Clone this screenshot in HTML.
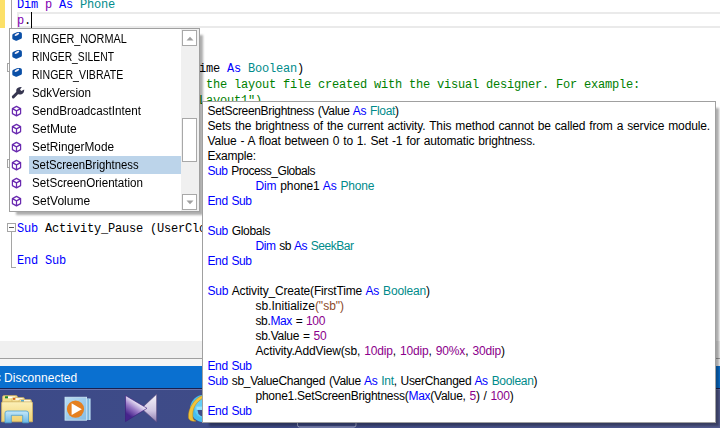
<!DOCTYPE html>
<html><head><meta charset="utf-8">
<style>
*{margin:0;padding:0;box-sizing:border-box}
html,body{width:720px;height:428px;overflow:hidden;background:#fff;position:relative}
.abs{position:absolute}
.cl{position:absolute;font-family:"Liberation Mono",monospace;font-size:12px;letter-spacing:-0.2px;line-height:16px;white-space:pre}
.tl{position:absolute;font-family:"Liberation Sans",sans-serif;font-size:12px;line-height:15px;white-space:pre;color:#000;word-spacing:0.8px}
.ai{position:absolute;left:0;width:170px;height:18px;font-family:"Liberation Sans",sans-serif;font-size:12px;line-height:18px;white-space:pre;color:#000}
.at{position:absolute;left:18px;top:0px;height:18px;padding-left:3px}
.sx{display:inline-block;transform-origin:0 0}
.sbx{position:absolute;left:18px;top:0;width:152px;height:18px;background:#bcd4ea}
.ic{position:absolute}
</style></head><body>
<div class="abs" style="left:0;top:0;width:5px;height:28px;background:#fce068"></div>
<div class="abs" style="left:11px;top:0;width:1px;height:40px;background:#a5a5a5"></div>
<div class="abs" style="left:17px;top:12px;width:703px;height:16px;border:2px solid #eaeaea;border-right:none"></div>
<div class="abs" style="left:31px;top:12px;width:1px;height:16px;background:#000"></div>
<div class="cl" style="top:-3px;left:17px"><span style="color:#0000ff">Dim</span><span style="color:#000000"> </span><span style="color:#8000b0">p</span><span style="color:#000000"> </span><span style="color:#0000ff">As</span><span style="color:#000000"> </span><span style="color:#008b8b">Phone</span></div><div class="cl" style="top:13px;left:17px"><span style="color:#8000b0">p</span><span style="color:#000000">.</span></div><div class="cl" style="top:29px;left:17px"><span style="color:#0000ff">End Sub</span></div><div class="cl" style="top:61px;left:17px"><span style="color:#0000ff">Sub</span><span style="color:#000000"> Activity_Create(FirstTime </span><span style="color:#0000ff">As</span><span style="color:#000000"> </span><span style="color:#008b8b">Boolean</span><span style="color:#000000">)</span></div><div class="cl" style="top:77px;left:17px"><span style="color:#008000">    &#x27;Do not forget to load the layout file created with the visual designer. For example:</span></div><div class="cl" style="top:93px;left:17px"><span style="color:#008000">    &#x27;Activity.LoadLayout(&quot;Layout1&quot;)</span></div><div class="cl" style="top:125px;left:17px"><span style="color:#0000ff">End Sub</span></div><div class="cl" style="top:157px;left:17px"><span style="color:#0000ff">Sub</span><span style="color:#000000"> Activity_Resume</span></div><div class="cl" style="top:189px;left:17px"><span style="color:#0000ff">End Sub</span></div><div class="cl" style="top:221px;left:17px"><span style="color:#0000ff">Sub</span><span style="color:#000000"> Activity_Pause (UserClosed </span><span style="color:#0000ff">As</span><span style="color:#000000"> </span><span style="color:#008b8b">Boolean</span><span style="color:#000000">)</span></div><div class="cl" style="top:253px;left:17px"><span style="color:#0000ff">End Sub</span></div>
<div class="abs" style="left:7px;top:63px;width:9px;height:9px;border:1px solid #a5a5a5;background:#fff"></div>
<div class="abs" style="left:7px;top:159px;width:9px;height:9px;border:1px solid #a5a5a5;background:#fff"></div>
<div class="abs" style="left:7px;top:223px;width:9px;height:9px;border:1px solid #a5a5a5;background:#fff"></div>
<div class="abs" style="left:9px;top:227px;width:5px;height:1px;background:#555"></div>
<div class="abs" style="left:11px;top:232px;width:1px;height:36px;background:#a5a5a5"></div>
<div class="abs" style="left:11px;top:267px;width:5px;height:1px;background:#a5a5a5"></div>
<div class="abs" style="left:0;top:341px;width:720px;height:17px;background:#f0f0f0"></div>
<div class="abs" style="left:0;top:358px;width:720px;height:1px;background:#a0a0a0"></div>
<div class="abs" style="left:0;top:359px;width:720px;height:7px;background:#f5f5f5"></div>
<div class="abs" style="left:0;top:366px;width:720px;height:22px;background:#0a70d0"></div>
<div class="abs" style="left:4px;top:367px;height:22px;line-height:22px;font-family:'Liberation Sans',sans-serif;font-size:12px;color:#fff;letter-spacing:0.05px">Disconnected</div>
<div class="abs" style="left:0;top:388px;width:720px;height:40px;background:linear-gradient(90deg,#3c4a88 0%,#404c88 40%,#545c90 100%)"></div>
<div class="abs" style="left:0;top:388px;width:720px;height:1px;background:#1a2050"></div>
<div class="abs" style="left:0;top:389px;width:720px;height:1px;background:#6a72aa"></div>
<svg class="abs" style="left:0;top:0" width="720" height="428" viewBox="0 0 720 428">
<defs>
<linearGradient id="fg" x1="0" y1="0" x2="0" y2="1"><stop offset="0" stop-color="#fbf0b8"/><stop offset="1" stop-color="#f0d070"/></linearGradient>
<linearGradient id="bl" x1="0" y1="0" x2="0" y2="1"><stop offset="0" stop-color="#c6e8f8"/><stop offset="1" stop-color="#6cb8e6"/></linearGradient>
<linearGradient id="kl" x1="0.55" y1="0.15" x2="0.15" y2="0.85"><stop offset="0.1" stop-color="#f2eefa"/><stop offset="0.5" stop-color="#9878c6"/><stop offset="0.9" stop-color="#46248c"/></linearGradient>
<linearGradient id="kr" x1="0" y1="0" x2="0" y2="1"><stop offset="0" stop-color="#f6f4fa"/><stop offset="0.6" stop-color="#d0c6e2"/><stop offset="1" stop-color="#8c7cae"/></linearGradient>
<linearGradient id="mp" x1="0" y1="0" x2="1" y2="1"><stop offset="0" stop-color="#b8dcf2"/><stop offset="1" stop-color="#86bde4"/></linearGradient>
</defs>
<!-- folder -->
<path d="M2.5 397 Q2.5 395.5 4 395.5 L16 395.5 Q17.5 395.5 17.5 397 L17.5 402 L2.5 402 Z" fill="#f3dc8c" stroke="#cfb060" stroke-width="0.6"/>
<rect x="5" y="396.3" width="3" height="2" fill="#1a8a2a"/>
<rect x="8" y="396.6" width="7" height="1.6" fill="#ffffff"/>
<path d="M12 399 Q12 397.6 13.5 397.6 L23 397.6 Q24.5 397.6 24.5 399 L24.5 402 L12 402 Z" fill="#f5e19a" stroke="#cfb060" stroke-width="0.6"/>
<rect x="13" y="398" width="2.5" height="1.8" fill="#d0601a"/>
<rect x="15.5" y="398.3" width="7" height="1.5" fill="#ffffff"/>
<path d="M19 401 Q19 399.5 20.5 399.5 L30 399.5 Q31.5 399.5 31.5 401 L31.5 403 L19 403 Z" fill="#f6e4a2" stroke="#cfb060" stroke-width="0.6"/>
<rect x="21" y="400.2" width="3" height="2" fill="#2a9ae0"/>
<rect x="24" y="400.4" width="6" height="1.6" fill="#ffffff"/>
<path d="M1.6 403 Q1.6 401.8 3 401.8 L31 401.8 Q32.5 401.8 32.5 403 L32.5 421.8 L1.6 421.8 Z" fill="url(#fg)" stroke="#d2b462" stroke-width="0.8"/>
<path d="M5 413 Q5 411 7.5 411 L26 411 Q28.5 411 28.5 413 L28.5 422.8 L22.7 422.8 L22.7 415.3 L11.3 415.3 L11.3 422.8 L5 422.8 Z" fill="url(#bl)" stroke="#4a9ed0" stroke-width="0.8"/>
<!-- media player -->
<rect x="86.4" y="398.5" width="4.2" height="21.5" fill="#b8dcf0"/>
<rect x="87.6" y="398.5" width="1" height="21.5" fill="#5aa0d0"/>
<rect x="65" y="397.2" width="21.6" height="23" fill="url(#mp)" stroke="#cfe8f6" stroke-width="0.8"/>
<circle cx="75.5" cy="409.1" r="8.6" fill="#e5801f"/>
<path d="M71.6 403.3 L71.6 414.9 L81.8 409.2 Z" fill="#ffffff"/>
<!-- bowtie -->
<path d="M156.6 394.2 L156.6 422 L141.4 408.4 Z" fill="url(#kr)" stroke="#5a4a80" stroke-width="0.6"/>
<path d="M125.5 395.5 L147 408.3 L125.5 421.6 Z" fill="url(#kl)" stroke="#3a1a7a" stroke-width="0.6"/>
<!-- IE -->
<circle cx="204" cy="408.5" r="13.8" fill="#46bdf0"/>
<circle cx="204" cy="408.5" r="9.5" fill="#62cdf6"/>
<path d="M197.5 410 L210 410 L210 417 Q203 418.5 198.5 414 Z" fill="#3f4c88"/>
<rect x="196.5" y="406.6" width="10" height="3.2" fill="#9ae4fb"/>
<path d="M188.5 418 C188 413 189.5 408 193 403 C195.5 399.5 198.5 397 202.5 395.5 L203.5 397.8 C200 399.8 197.5 402 195.5 405 C193 409 192.3 413.5 193 418 C193.3 419.5 194.5 420.5 196 421 C193 421.8 189.5 421 188.5 418 Z" fill="#f2c43a" stroke="#c08a10" stroke-width="0.5"/>
<!-- taskbar button outline -->
<path d="M297.5 421 L297.5 425 Q297.5 427 299.5 427 L354 427 Q356 427 356 425 L356 421" fill="none" stroke="#a8aed0" stroke-width="1"/>
</svg>

<div class="abs" style="left:0;top:375px;width:1px;height:2px;background:#7fb0dc"></div><div class="abs" style="left:0;top:379px;width:1px;height:2px;background:#7fb0dc"></div>
<div class="abs" style="left:16px;top:35px;width:187px;height:180px;background:rgba(0,0,0,0.32);filter:blur(1.2px)"></div>
<div class="abs" style="left:9px;top:28px;width:191px;height:184px;background:#fff;border:1px solid #a0a0a0">
  <div class="abs" style="left:1px;top:1px"><div class="ai" style="top:0px"><svg class="ic" style="left:1px;top:2px;overflow:visible" width="11" height="10" viewBox="0 0 11 10"><path d="M0.3 3.2 Q0.4 2.2 1.4 1.8 L4.8 0.3 Q5.5 0 6.3 0 L7.8 0 Q8.6 0 9.2 0.6 L9.6 1.1 Q9.9 1.5 9.9 2.2 L9.9 5.6 Q9.9 6.3 9.2 6.8 L5.2 8.6 Q4.2 9 3.3 8.6 L1 7.4 Q0.3 7 0.3 6.3 Z" fill="#0a4fa6"/><ellipse cx="4.9" cy="2.3" rx="2.6" ry="1.05" transform="rotate(-29 4.9 2.3)" fill="#f2ecf6"/></svg><span class="at"><span class="sx" style="transform:scaleX(0.9048)">RINGER_NORMAL</span></span></div><div class="ai" style="top:18px"><svg class="ic" style="left:1px;top:2px;overflow:visible" width="11" height="10" viewBox="0 0 11 10"><path d="M0.3 3.2 Q0.4 2.2 1.4 1.8 L4.8 0.3 Q5.5 0 6.3 0 L7.8 0 Q8.6 0 9.2 0.6 L9.6 1.1 Q9.9 1.5 9.9 2.2 L9.9 5.6 Q9.9 6.3 9.2 6.8 L5.2 8.6 Q4.2 9 3.3 8.6 L1 7.4 Q0.3 7 0.3 6.3 Z" fill="#0a4fa6"/><ellipse cx="4.9" cy="2.3" rx="2.6" ry="1.05" transform="rotate(-29 4.9 2.3)" fill="#f2ecf6"/></svg><span class="at"><span class="sx" style="transform:scaleX(0.8592)">RINGER_SILENT</span></span></div><div class="ai" style="top:36px"><svg class="ic" style="left:1px;top:2px;overflow:visible" width="11" height="10" viewBox="0 0 11 10"><path d="M0.3 3.2 Q0.4 2.2 1.4 1.8 L4.8 0.3 Q5.5 0 6.3 0 L7.8 0 Q8.6 0 9.2 0.6 L9.6 1.1 Q9.9 1.5 9.9 2.2 L9.9 5.6 Q9.9 6.3 9.2 6.8 L5.2 8.6 Q4.2 9 3.3 8.6 L1 7.4 Q0.3 7 0.3 6.3 Z" fill="#0a4fa6"/><ellipse cx="4.9" cy="2.3" rx="2.6" ry="1.05" transform="rotate(-29 4.9 2.3)" fill="#f2ecf6"/></svg><span class="at"><span class="sx" style="transform:scaleX(0.8790)">RINGER_VIBRATE</span></span></div><div class="ai" style="top:54px"><svg class="ic" style="left:-0.5px;top:0px" width="16" height="16" viewBox="0 0 16 16"><line x1="2.3" y1="12.9" x2="7" y2="8.3" stroke="#363650" stroke-width="2.9" stroke-linecap="round"/><path d="M5.2 6.5 C5.2 4.2 7.5 2.8 10.8 3.0 L9.0 5.6 L10.3 7.0 L13.2 5.6 C13.4 8.6 11.5 10.6 8.8 10.6 C6.6 10.6 5.2 8.8 5.2 6.5 Z" fill="#363650"/></svg><span class="at"><span class="sx" style="transform:scaleX(0.9712)">SdkVersion</span></span></div><div class="ai" style="top:72px"><svg class="ic" style="left:-1px;top:3px" width="12" height="12" viewBox="0 0 12 12"><path d="M6.5 1.4 L10.6 3.6 L10.6 8.6 L6.5 10.9 L2.4 8.6 L2.4 3.6 Z M2.4 3.6 L6.5 5.9 L10.6 3.6 M6.5 5.9 L6.5 10.9" fill="none" stroke="#6a2ab0" stroke-width="1.25" stroke-linejoin="round"/></svg><span class="at"><span class="sx" style="transform:scaleX(0.9719)">SendBroadcastIntent</span></span></div><div class="ai" style="top:90px"><svg class="ic" style="left:-1px;top:3px" width="12" height="12" viewBox="0 0 12 12"><path d="M6.5 1.4 L10.6 3.6 L10.6 8.6 L6.5 10.9 L2.4 8.6 L2.4 3.6 Z M2.4 3.6 L6.5 5.9 L10.6 3.6 M6.5 5.9 L6.5 10.9" fill="none" stroke="#6a2ab0" stroke-width="1.25" stroke-linejoin="round"/></svg><span class="at"><span class="sx" style="transform:scaleX(1.0014)">SetMute</span></span></div><div class="ai" style="top:108px"><svg class="ic" style="left:-1px;top:3px" width="12" height="12" viewBox="0 0 12 12"><path d="M6.5 1.4 L10.6 3.6 L10.6 8.6 L6.5 10.9 L2.4 8.6 L2.4 3.6 Z M2.4 3.6 L6.5 5.9 L10.6 3.6 M6.5 5.9 L6.5 10.9" fill="none" stroke="#6a2ab0" stroke-width="1.25" stroke-linejoin="round"/></svg><span class="at"><span class="sx" style="transform:scaleX(0.9843)">SetRingerMode</span></span></div><div class="ai" style="top:126px"><div class="sbx"></div><svg class="ic" style="left:-1px;top:3px" width="12" height="12" viewBox="0 0 12 12"><path d="M6.5 1.4 L10.6 3.6 L10.6 8.6 L6.5 10.9 L2.4 8.6 L2.4 3.6 Z M2.4 3.6 L6.5 5.9 L10.6 3.6 M6.5 5.9 L6.5 10.9" fill="none" stroke="#6a2ab0" stroke-width="1.25" stroke-linejoin="round"/></svg><span class="at"><span class="sx" style="transform:scaleX(0.9465)">SetScreenBrightness</span></span></div><div class="ai" style="top:144px"><svg class="ic" style="left:-1px;top:3px" width="12" height="12" viewBox="0 0 12 12"><path d="M6.5 1.4 L10.6 3.6 L10.6 8.6 L6.5 10.9 L2.4 8.6 L2.4 3.6 Z M2.4 3.6 L6.5 5.9 L10.6 3.6 M6.5 5.9 L6.5 10.9" fill="none" stroke="#6a2ab0" stroke-width="1.25" stroke-linejoin="round"/></svg><span class="at"><span class="sx" style="transform:scaleX(0.9675)">SetScreenOrientation</span></span></div><div class="ai" style="top:162px"><svg class="ic" style="left:-1px;top:3px" width="12" height="12" viewBox="0 0 12 12"><path d="M6.5 1.4 L10.6 3.6 L10.6 8.6 L6.5 10.9 L2.4 8.6 L2.4 3.6 Z M2.4 3.6 L6.5 5.9 L10.6 3.6 M6.5 5.9 L6.5 10.9" fill="none" stroke="#6a2ab0" stroke-width="1.25" stroke-linejoin="round"/></svg><span class="at"><span class="sx" style="transform:scaleX(1.0013)">SetVolume</span></span></div></div>
  <div class="abs" style="left:171px;top:0;width:18px;height:182px;background:#f0f0f0"></div>
  <div class="abs" style="left:172px;top:1px;width:15px;height:16px;border:1px solid #a8a8a8;background:#fff"><svg class="abs" style="left:2.5px;top:4.5px" width="8" height="5" viewBox="0 0 8 5"><path d="M0.5 4.5 L4 0.8 L7.5 4.5 Z" fill="#a0a0a0"/></svg></div>
  <div class="abs" style="left:172px;top:89px;width:15px;height:44px;border:1px solid #a8a8a8;background:#fff"></div>
  <div class="abs" style="left:172px;top:165px;width:15px;height:16px;border:1px solid #a8a8a8;background:#fff"><svg class="abs" style="left:2.5px;top:5px" width="8" height="5" viewBox="0 0 8 5"><path d="M0.5 0.5 L4 4.2 L7.5 0.5 Z" fill="#a0a0a0"/></svg></div>
</div>
<div class="abs" style="left:209px;top:108px;width:510px;height:318px;background:rgba(0,0,0,0.32);filter:blur(1.2px)"></div>
<div class="abs" style="left:202px;top:101px;width:514px;height:322px;background:#fff;border:1px solid #a0a0a0">
<div class="tl" style="top:2px;left:4.5px;letter-spacing:-0.326px"><span style="color:#000000">SetScreenBrightness (Value </span><span style="color:#0000ff">As</span><span style="color:#000000"> </span><span style="color:#008b8b">Float</span><span style="color:#000000">)</span></div><div class="tl" style="top:17px;left:4.5px;letter-spacing:-0.139px"><span style="color:#000000">Sets the brightness of the current activity. This method cannot be called from a service module.</span></div><div class="tl" style="top:32px;left:4.5px;letter-spacing:-0.165px"><span style="color:#000000">Value - A float between 0 to 1. Set -1 for automatic brightness.</span></div><div class="tl" style="top:47px;left:4.5px;letter-spacing:-0.200px"><span style="color:#000000">Example:</span></div><div class="tl" style="top:62px;left:4.5px;letter-spacing:-0.456px"><span style="color:#0000ff">Sub</span><span style="color:#000000"> Process_Globals</span></div><div class="tl" style="top:77px;left:52.5px;letter-spacing:-0.156px"><span style="color:#0000ff">Dim</span><span style="color:#000000"> phone1 </span><span style="color:#0000ff">As</span><span style="color:#000000"> </span><span style="color:#008b8b">Phone</span></div><div class="tl" style="top:92px;left:4.5px;letter-spacing:-0.400px"><span style="color:#0000ff">End Sub</span></div><div class="tl" style="top:122px;left:4.5px;letter-spacing:-0.320px"><span style="color:#0000ff">Sub</span><span style="color:#000000"> Globals</span></div><div class="tl" style="top:137px;left:52.5px;letter-spacing:-0.462px"><span style="color:#0000ff">Dim</span><span style="color:#000000"> sb </span><span style="color:#0000ff">As</span><span style="color:#000000"> </span><span style="color:#008b8b">SeekBar</span></div><div class="tl" style="top:152px;left:4.5px;letter-spacing:-0.400px"><span style="color:#0000ff">End Sub</span></div><div class="tl" style="top:182px;left:4.5px;letter-spacing:-0.155px"><span style="color:#0000ff">Sub</span><span style="color:#000000"> Activity_Create(FirstTime </span><span style="color:#0000ff">As</span><span style="color:#000000"> </span><span style="color:#008b8b">Boolean</span><span style="color:#000000">)</span></div><div class="tl" style="top:197px;left:52.5px;letter-spacing:0.000px"><span style="color:#000000">sb.Initialize</span><span style="color:#8b4a2b">(&quot;sb&quot;)</span></div><div class="tl" style="top:212px;left:52.5px;letter-spacing:-0.382px"><span style="color:#000000">sb.</span><span style="color:#0000ff">Max</span><span style="color:#000000"> = </span><span style="color:#8b008b">100</span></div><div class="tl" style="top:227px;left:52.5px;letter-spacing:-0.283px"><span style="color:#000000">sb.Value = </span><span style="color:#8b008b">50</span></div><div class="tl" style="top:242px;left:52.5px;letter-spacing:-0.148px"><span style="color:#000000">Activity.AddView(sb, </span><span style="color:#8b008b">10dip</span><span style="color:#000000">, </span><span style="color:#8b008b">10dip</span><span style="color:#000000">, </span><span style="color:#8b008b">90%x</span><span style="color:#000000">, </span><span style="color:#8b008b">30dip</span><span style="color:#000000">)</span></div><div class="tl" style="top:257px;left:4.5px;letter-spacing:-0.400px"><span style="color:#0000ff">End Sub</span></div><div class="tl" style="top:272px;left:4.5px;letter-spacing:-0.305px"><span style="color:#0000ff">Sub</span><span style="color:#000000"> sb_ValueChanged (Value </span><span style="color:#0000ff">As</span><span style="color:#000000"> </span><span style="color:#008b8b">Int</span><span style="color:#000000">, UserChanged </span><span style="color:#0000ff">As</span><span style="color:#000000"> </span><span style="color:#008b8b">Boolean</span><span style="color:#000000">)</span></div><div class="tl" style="top:287px;left:52.5px;letter-spacing:-0.265px"><span style="color:#000000">phone1.SetScreenBrightness(</span><span style="color:#0000ff">Max</span><span style="color:#000000">(Value, </span><span style="color:#8b008b">5</span><span style="color:#000000">) / </span><span style="color:#8b008b">100</span><span style="color:#000000">)</span></div><div class="tl" style="top:302px;left:4.5px;letter-spacing:-0.400px"><span style="color:#0000ff">End Sub</span></div>
</div>
</body></html>
